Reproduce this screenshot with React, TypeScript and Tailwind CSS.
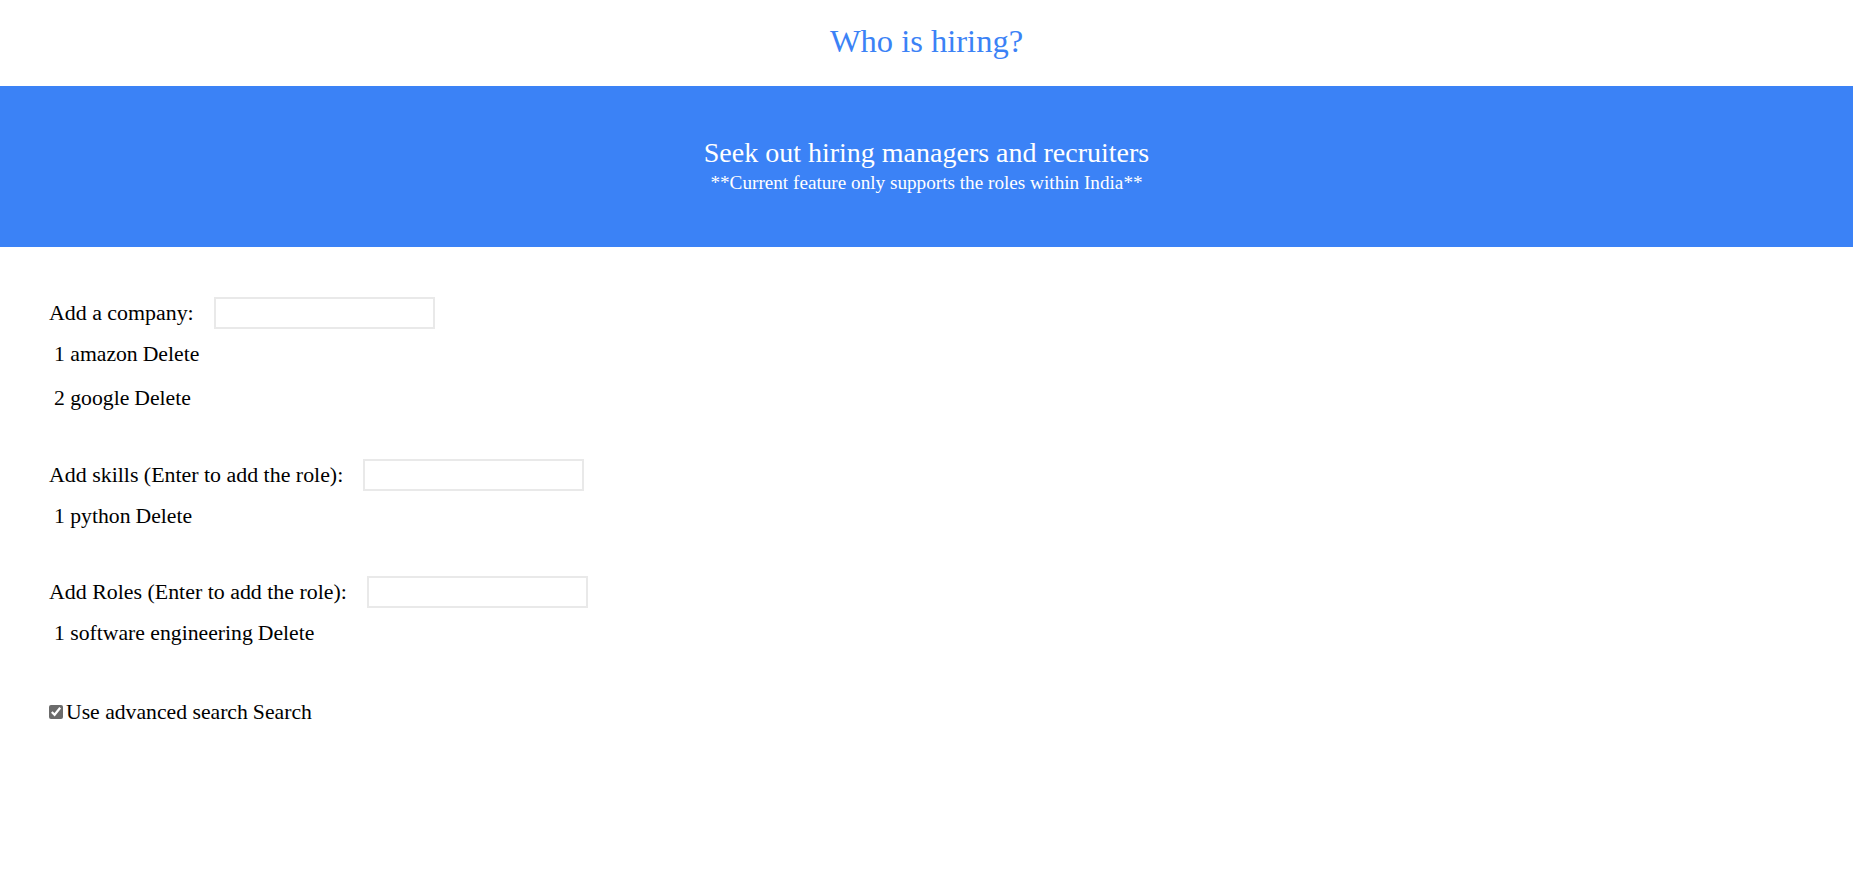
import { useState } from "react";

type ListProps = { items: string[] };

function ItemList(props: ListProps) {
  return (
    <ul className="mt-[3px]">
      {props.items.map((item, i) => (
        <li key={item} className="flex h-[44px] items-center pl-[5px]">
          <span>
            {i + 1} {item}{" "}
          </span>
          <button type="button" className="ml-[5px] cursor-pointer">
            Delete
          </button>
        </li>
      ))}
    </ul>
  );
}

function InputBlock(props: { label: string; items: string[]; className?: string }) {
  return (
    <div className={props.className}>
      <div className="flex h-[32px] items-center gap-[20px]">
        <label className="text-[21.9px]">{props.label}</label>
        <input
          type="text"
          className="h-[32px] w-[221px] border-2 border-[#e9e9e9] px-2 outline-none"
        />
      </div>
      <ItemList items={props.items} />
    </div>
  );
}

export default function App() {
  const [advanced, setAdvanced] = useState(true);

  return (
    <div className="min-h-screen bg-white font-['Liberation_Serif',serif] text-black">
      <header className="h-[86px] pt-[23px] text-center">
        <h1 className="text-[32.5px] leading-[37px] text-[#3b82f6]">Who is hiring?</h1>
      </header>

      <section className="flex h-[161px] flex-col items-center bg-[#3b82f6] pt-[51px] text-white">
        <h2 className="text-[28px] leading-[32px]">Seek out hiring managers and recruiters</h2>
        <p className="mt-[3px] text-[19.2px] leading-[22px]">
          **Current feature only supports the roles within India**
        </p>
      </section>

      <main className="px-[49px] pt-[50px] text-[21.7px] leading-[24px]">
        <InputBlock className="mb-[39px]" label="Add a company:" items={["amazon", "google"]} />
        <InputBlock
          className="mb-[38px]"
          label="Add skills (Enter to add the role):"
          items={["python"]}
        />
        <InputBlock
          className="mb-[45px]"
          label="Add Roles (Enter to add the role):"
          items={["software engineering"]}
        />

        <div className="flex h-[24px] items-center">
          <input
            type="checkbox"
            checked={advanced}
            onChange={(e) => setAdvanced(e.target.checked)}
            className="m-0 mr-[3px] h-[14px] w-[14px] accent-[#6b6b6b]"
          />
          <span>Use advanced search</span>
          <button type="button" className="ml-[5px] cursor-pointer">
            Search
          </button>
        </div>
      </main>
    </div>
  );
}
